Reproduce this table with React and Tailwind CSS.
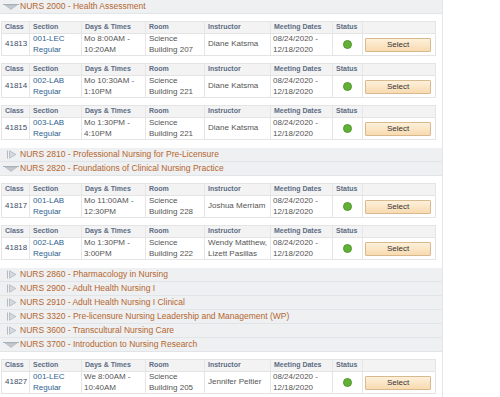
import React from 'react';

const font = { fontFamily: '"Liberation Sans", Arial, sans-serif' };

const groups = [
    {
        title: 'NURS 2000 - Health Assessment',
        open: true,
        rows: [
            { id: '41813', section: '001-LEC', days: ['Mo 8:00AM -', '10:20AM'], room: 'Building 207', instructor: ['Diane Katsma'] },
            { id: '41814', section: '002-LAB', days: ['Mo 10:30AM -', '1:10PM'], room: 'Building 221', instructor: ['Diane Katsma'] },
            { id: '41815', section: '003-LAB', days: ['Mo 1:30PM -', '4:10PM'], room: 'Building 221', instructor: ['Diane Katsma'] },
        ],
    },
    { title: 'NURS 2810 - Professional Nursing for Pre-Licensure' },
    {
        title: 'NURS 2820 - Foundations of Clinical Nursing Practice',
        open: true,
        rows: [
            { id: '41817', section: '001-LAB', days: ['Mo 11:00AM -', '12:30PM'], room: 'Building 228', instructor: ['Joshua Merriam'] },
            { id: '41818', section: '002-LAB', days: ['Mo 1:30PM -', '3:00PM'], room: 'Building 222', instructor: ['Wendy Matthew,', 'Lizett Pasillas'] },
        ],
    },
    { title: 'NURS 2860 - Pharmacology in Nursing' },
    { title: 'NURS 2900 - Adult Health Nursing I' },
    { title: 'NURS 2910 - Adult Health Nursing I Clinical' },
    { title: 'NURS 3320 - Pre-licensure Nursing Leadership and Management (WP)' },
    { title: 'NURS 3600 - Transcultural Nursing Care' },
    {
        title: 'NURS 3700 - Introduction to Nursing Research',
        open: true,
        rows: [
            { id: '41827', section: '001-LEC', days: ['We 8:00AM -', '10:40AM'], room: 'Building 205', instructor: ['Jennifer Peltier'] },
        ],
    },
];

const cols = ['w-[28px]', 'w-[52px]', 'w-[64px]', 'w-[59px]', 'w-[66px]', 'w-[62px]', 'w-[30px]', 'w-[72px]'];
const heads = ['Class', 'Section', 'Days & Times', 'Room', 'Instructor', 'Meeting Dates', 'Status', ''];

const OpenIcon = () => (
    <svg width="16" height="6" viewBox="0 0 16 6" className="ml-[3px] mr-[1px]">
        <line x1="0" y1="0.5" x2="16" y2="0.5" stroke="#a9b1ba" strokeWidth="1" />
        <path d="M2 1 L14 1 L8 5.5 Z" fill="#c3c9cf" stroke="#a9b1ba" strokeWidth="0.6" />
    </svg>
);

const ClosedIcon = () => (
    <svg width="10" height="9" viewBox="0 0 10 9" className="ml-[7px] mr-[3px]">
        <line x1="0.5" y1="0.5" x2="0.5" y2="8.5" stroke="#b3bac2" strokeWidth="1" />
        <path d="M2.5 0.8 L8.8 4.5 L2.5 8.2 Z" fill="#d4d9de" stroke="#a9b1ba" strokeWidth="0.7" />
    </svg>
);

const GroupHeader = ({ title, open }) => (
    <div className="h-[14px] flex items-center bg-[#eef0f2] border-b border-[#e2e5e8]">
        {open ? <OpenIcon /> : <ClosedIcon />}
        <span className="text-[8.5px] leading-none text-[#b5672f] whitespace-nowrap">{title}</span>
    </div>
);

const ClassTable = ({ row }) => (
    <div className="ml-[1px] w-[435px] border border-[#e4e4e4]">
        {/* header */}
        <div className="flex h-[12px] bg-[#f3f3f3] border-b border-[#e4e4e4]">
            {heads.map((h, i) => (
                <div
                    key={i}
                    className={`${cols[i]} shrink-0 flex items-center pl-[3px] text-[7px] font-bold text-[#5c6c84] whitespace-nowrap ${i < 7 ? 'border-r border-[#e6e6e6]' : ''}`}
                >
                    {h}
                </div>
            ))}
        </div>
        {/* data */}
        <div className="flex h-[21px] bg-white text-[8px] leading-[10.5px]">
            <div className="w-[28px] shrink-0 flex items-center pl-[3px] text-[#3d4c66] border-r border-[#e6e6e6]">{row.id}</div>
            <div className="w-[52px] shrink-0 flex flex-col justify-center pl-[3px] text-[#2e5f8f] border-r border-[#e6e6e6]">
                <span>{row.section}</span>
                <span>Regular</span>
            </div>
            <div className="w-[64px] shrink-0 flex flex-col justify-center pl-[2px] text-[#555] border-r border-[#e6e6e6]">
                <span>{row.days[0]}</span>
                <span>{row.days[1]}</span>
            </div>
            <div className="w-[59px] shrink-0 flex flex-col justify-center pl-[3px] text-[#555] border-r border-[#e6e6e6]">
                <span>Science</span>
                <span>{row.room}</span>
            </div>
            <div className="w-[66px] shrink-0 flex flex-col justify-center pl-[3px] text-[#555] border-r border-[#e6e6e6] whitespace-nowrap">
                {row.instructor.map((n) => (
                    <span key={n}>{n}</span>
                ))}
            </div>
            <div className="w-[62px] shrink-0 flex flex-col justify-center pl-[2px] text-[#555] border-r border-[#e6e6e6]">
                <span>08/24/2020 -</span>
                <span>12/18/2020</span>
            </div>
            <div className="w-[30px] shrink-0 flex items-center justify-center border-r border-[#e6e6e6]">
                <div className="w-[9px] h-[9px] rounded-full bg-[#62b036] border border-[#4f9a2a]" />
            </div>
            <div className="w-[72px] shrink-0 flex items-center pl-[2px]">
                <button className="w-[66px] h-[14px] rounded-[1px] border border-[#d7b98d] bg-gradient-to-b from-[#fdf0da] to-[#f8dab0] text-[8px] leading-none text-[#333]">
                    Select
                </button>
            </div>
        </div>
    </div>
);

export default function App() {
    return (
        <div className="w-[500px] h-[397px] bg-white overflow-hidden" style={font}>
            <div className="w-[443px] h-full border-r border-[#e3e5e8]">
                {groups.map((g) => (
                    <div key={g.title}>
                        <GroupHeader title={g.title} open={g.open} />
                        {g.open && (
                            <div className="flex flex-col gap-[7px] pt-[7px] pb-[8px]">
                                {g.rows.map((r) => (
                                    <ClassTable key={r.id} row={r} />
                                ))}
                            </div>
                        )}
                    </div>
                ))}
            </div>
        </div>
    );
}
